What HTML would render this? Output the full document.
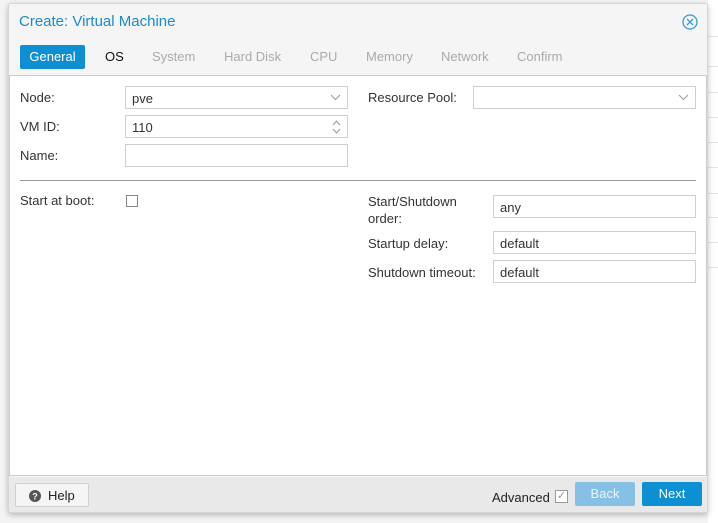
<!DOCTYPE html>
<html><head><style>
*{box-sizing:border-box;margin:0;padding:0}
body{width:718px;height:523px;background:#f3f3f3;font-family:"Liberation Sans",Arial,sans-serif;font-size:13px;color:#333;position:relative;overflow:hidden}
.bgr{position:absolute;left:708px;top:0;width:10px;height:523px;background:#fff}
.bgr div{position:absolute;left:0;width:10px;height:1px;background:#e4e4e4}
.dlg{position:absolute;left:8px;top:3px;width:700px;height:510px;background:#f5f5f5;border:1px solid #d6d6d6;box-shadow:0 2px 6px rgba(0,0,0,.25);border-radius:3px}
.a{position:absolute;white-space:nowrap}
.title{left:10px;top:9px;font-size:15px;color:#1b8bcc}
.tab{top:45px;font-size:13px;color:#aaa}
.gen{left:11px;top:41px;width:65px;height:24px;background:#0e8fd1;color:#fff;border-radius:2px;text-align:center;line-height:24px}
.body{position:absolute;left:0;top:71px;width:698px;height:401px;background:#fff;border:1px solid #ccc}
.in{position:absolute;height:23px;border:1px solid #cfcfcf;background:#fff;padding-left:6px;line-height:23px;color:#333}
.foot{position:absolute;left:0;top:473px;width:698px;height:35px;background:#e9e9e9}
.btn{position:absolute;height:24px;border-radius:2px;text-align:center;line-height:24px}
.dd{position:absolute;right:6px;top:7px}
</style></head><body>
<div class="bgr"><div style="top:36px"></div><div style="top:66px"></div><div style="top:92px"></div><div style="top:117px"></div><div style="top:142px"></div><div style="top:167px"></div><div style="top:193px"></div><div style="top:217px"></div><div style="top:242px"></div><div style="top:267px"></div></div>
<div class="dlg">
<div class="a title">Create: Virtual Machine</div>
<svg class="a" style="left:673px;top:10px" width="16" height="16" viewBox="0 0 16 16"><circle cx="8" cy="8" r="7" fill="none" stroke="#3a9bd5" stroke-width="1.3"/><path d="M5 5L11 11M11 5L5 11" stroke="#3a9bd5" stroke-width="1.3"/></svg>
<div class="a gen">General</div>
<div class="a tab" style="left:96px;color:#111">OS</div>
<div class="a tab" style="left:143px">System</div>
<div class="a tab" style="left:215px">Hard Disk</div>
<div class="a tab" style="left:301px">CPU</div>
<div class="a tab" style="left:357px">Memory</div>
<div class="a tab" style="left:432px">Network</div>
<div class="a tab" style="left:508px">Confirm</div>
<div class="body">
<div class="a" style="left:10px;top:14px">Node:</div>
<div class="in" style="left:115px;top:10px;width:223px">pve<svg class="dd" width="11" height="7" viewBox="0 0 11 7"><path d="M1 1L5.5 5.5L10 1" fill="none" stroke="#999"/></svg></div>
<div class="a" style="left:10px;top:43px">VM ID:</div>
<div class="in" style="left:115px;top:39px;width:223px">110<svg class="a" style="right:6px;top:3px" width="9" height="16" viewBox="0 0 9 16"><path d="M1 6L4.5 2L8 6M1 10L4.5 14L8 10" fill="none" stroke="#999"/></svg></div>
<div class="a" style="left:10px;top:72px">Name:</div>
<div class="in" style="left:115px;top:68px;width:223px"></div>
<div class="a" style="left:358px;top:14px">Resource Pool:</div>
<div class="in" style="left:463px;top:10px;width:223px"><svg class="dd" width="11" height="7" viewBox="0 0 11 7"><path d="M1 1L5.5 5.5L10 1" fill="none" stroke="#999"/></svg></div>
<div class="a" style="left:10px;top:104px;width:676px;height:1px;background:#999"></div>
<div class="a" style="left:10px;top:117px">Start at boot:</div>
<div class="a" style="left:116px;top:119px;width:12px;height:12px;border:1px solid #888;background:#fff"></div>
<div class="a" style="left:358px;top:117px;line-height:17px">Start/Shutdown<br>order:</div>
<div class="in" style="left:483px;top:119px;width:203px">any</div>
<div class="a" style="left:358px;top:160px">Startup delay:</div>
<div class="in" style="left:483px;top:155px;width:203px">default</div>
<div class="a" style="left:358px;top:189px">Shutdown timeout:</div>
<div class="in" style="left:483px;top:184px;width:203px">default</div>
</div>
<div class="foot">
<div class="btn" style="left:6px;top:6px;width:74px;background:#f5f5f5;border:1px solid #d0d0d0;color:#222;text-align:left;padding-left:32px">Help</div>
<svg class="a" style="left:20px;top:13px" width="12" height="12" viewBox="0 0 12 12"><circle cx="6" cy="6" r="6" fill="#555"/><text x="6" y="9.5" font-size="9" font-weight="bold" fill="#fff" text-anchor="middle" font-family="Liberation Sans">?</text></svg>
<div class="a" style="left:483px;top:13px;color:#222">Advanced</div>
<div class="a" style="left:546px;top:13px;width:13px;height:13px;border:1px solid #999;background:#fff;color:#999;font-size:11px;line-height:11px;text-align:center">&#10003;</div>
<div class="btn" style="left:566px;top:5px;width:60px;background:#86c0e5;color:#eaf4fb">Back</div>
<div class="btn" style="left:633px;top:5px;width:60px;background:#0e8fd1;color:#fff">Next</div>
</div>
</div>
</body></html>
